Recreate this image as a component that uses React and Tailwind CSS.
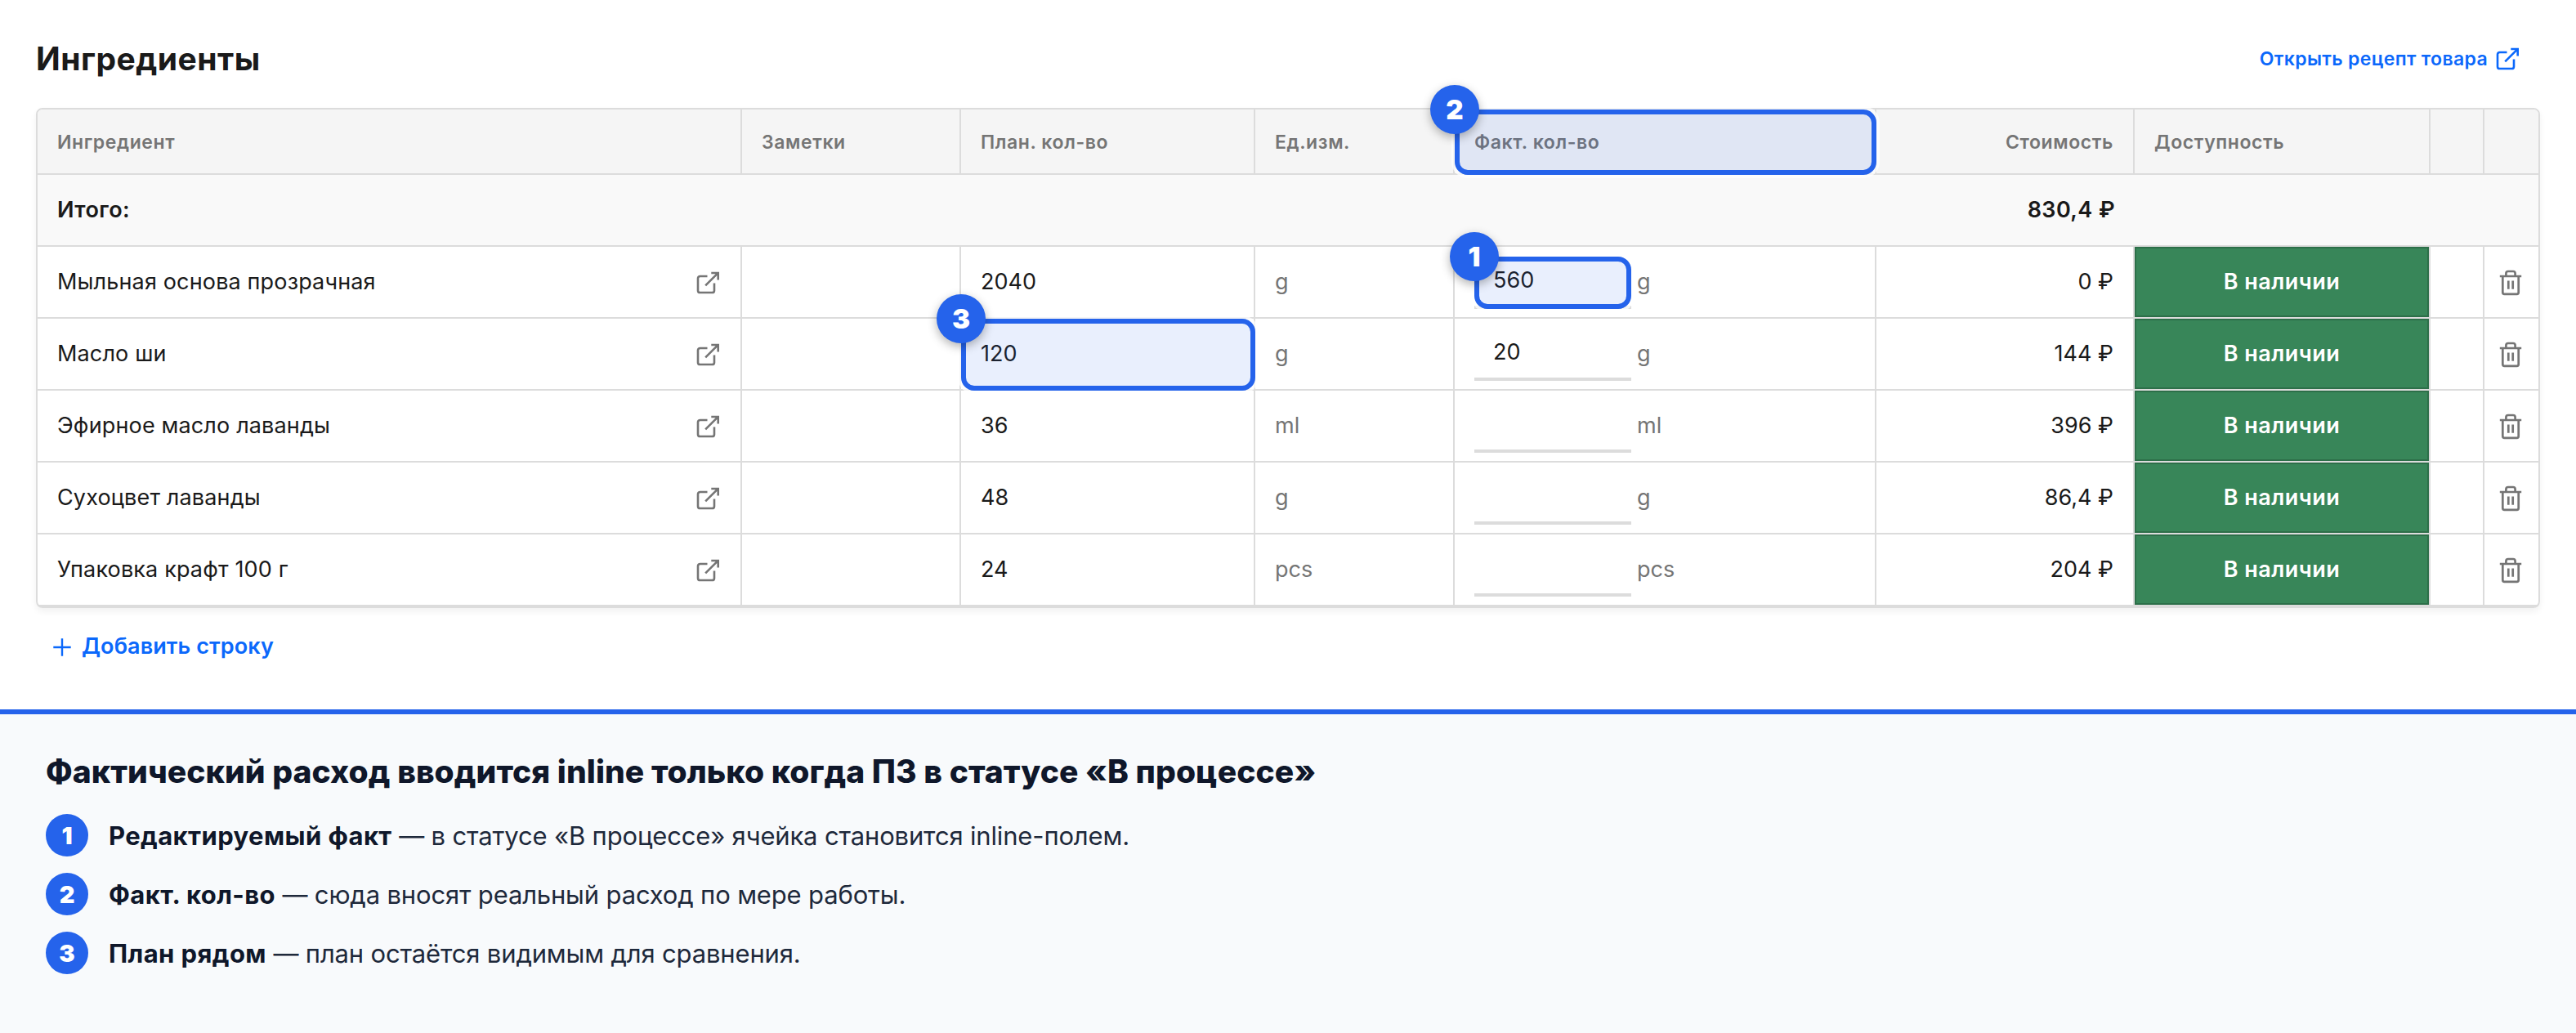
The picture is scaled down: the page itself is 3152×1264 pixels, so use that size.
import React from 'react';

const ingredients = [
  { name: 'Мыльная основа прозрачная', plan: '2040', unit: 'g', fact: '560', cost: '0 ₽', factMark: 1 },
  { name: 'Масло ши', plan: '120', unit: 'g', fact: '20', cost: '144 ₽', planMark: 3 },
  { name: 'Эфирное масло лаванды', plan: '36', unit: 'ml', fact: '', cost: '396 ₽' },
  { name: 'Сухоцвет лаванды', plan: '48', unit: 'g', fact: '', cost: '86,4 ₽' },
  { name: 'Упаковка крафт 100 г', plan: '24', unit: 'pcs', fact: '', cost: '204 ₽' },
];

const notes = [
  { title: 'Редактируемый факт', text: '— в статусе «В процессе» ячейка становится inline-полем.' },
  { title: 'Факт. кол-во', text: '— сюда вносят реальный расход по мере работы.' },
  { title: 'План рядом', text: '— план остаётся видимым для сравнения.' },
];

const columns = 'grid grid-cols-[862px_268px_360px_244px_516px_316px_362px_66px_66px]';
const cell = 'flex items-center border-r-2 border-[#dcdcdc] pl-6 pb-0.5';
const headCell = 'flex items-center border-r-2 border-[#dcdcdc] pl-6 pt-0.5';

function OpenIcon({ className }) {
  return (
    <svg className={className} width="28" height="28" viewBox="0 0 28 28" fill="none" stroke="currentColor" strokeWidth="2.6">
      <path d="M13.5 6H4.6A2.6 2.6 0 0 0 2 8.6v14.8A2.6 2.6 0 0 0 4.6 26h14.8a2.6 2.6 0 0 0 2.6-2.6V14.5" />
      <path d="M18.3 2h8.4v8.6M26.5 2.2 11.2 17.4" />
    </svg>
  );
}

function TrashIcon() {
  return (
    <svg width="28" height="32" viewBox="0 0 28 32" fill="none" stroke="#757575" strokeWidth="2.7">
      <path d="M.8 8h26.4M4.3 8v19.8a2 2 0 0 0 2 2h15.4a2 2 0 0 0 2-2V8" />
      <path d="M8.4 8V4.6A2.6 2.6 0 0 1 11 2h6a2.6 2.6 0 0 1 2.6 2.6V8" />
      <path d="M11.3 13.4v10.4M16.7 13.4v10.4" />
    </svg>
  );
}

// Рамка-подсветка с номером в левом верхнем углу
function Highlight({ number, className }) {
  return (
    <div className={`absolute z-10 rounded-2xl border-6 border-[#2563eb] bg-[#2563eb]/10 shadow-[0_0_0_4px_rgba(255,255,255,0.7)] ${className}`}>
      <span className="absolute -left-9 -top-9 flex size-15 items-center justify-center rounded-full bg-[#2563eb] text-[33px] leading-none font-black text-white shadow-[0_4px_12px_rgba(0,0,0,0.3)]">
        {number}
      </span>
    </div>
  );
}

function Row({ item }) {
  return (
    <div className={`${columns} h-22 border-b-2 border-[#dcdcdc]`}>
      <div className={`${cell} justify-between pr-6.5`}>
        <span className="tracking-[0.15px]">{item.name}</span>
        <OpenIcon className="mt-1 text-[#757575]" />
      </div>
      <div className={cell}></div>
      <div className={`${cell} relative`}>
        {item.plan}
        {item.planMark && <Highlight number={item.planMark} className="-right-0.5 -bottom-0.5 left-0 top-0" />}
      </div>
      <div className={`${cell} text-[#757575]`}>{item.unit}</div>
      <div className={cell}>
        <div className="relative mt-1 flex h-16 w-48 items-center border-b-4 border-[#dcdcdc] pb-1 pl-[23px]">
          {item.fact}
          {item.factMark && <Highlight number={item.factMark} className="-bottom-1 left-0 right-0 top-0" />}
        </div>
        <span className="ml-[7px] text-[#757575]">{item.unit}</span>
      </div>
      <div className={`${cell} justify-end pr-6`}>{item.cost}</div>
      <div className="border-r-2 border-[#dcdcdc]">
        <div className="flex h-full items-center justify-center border-2 border-[#2d6f49] bg-[#388659] pb-0.5 font-semibold tracking-[0.45px] text-white">
          В наличии
        </div>
      </div>
      <div className="border-r-2 border-[#dcdcdc]"></div>
      <div className="flex items-center justify-center pt-0.5 pr-0.5">
        <TrashIcon />
      </div>
    </div>
  );
}

function App() {
  return (
    <div className="flex h-[1264px] w-[3152px] flex-col overflow-hidden bg-white font-['Inter',sans-serif] text-[27px] leading-none text-[#1a1a1a]">
      <div className="h-[868px] px-11">
        <div className="flex h-33 items-center justify-between pt-3 pr-6.5">
          <h1 className="pb-0.5 text-[39px] font-bold tracking-[0.5px]">Ингредиенты</h1>
          <a className="flex items-center gap-2.5 text-[23px] font-semibold tracking-[0.35px] text-[#0b68fb]">
            Открыть рецепт товара
            <OpenIcon />
          </a>
        </div>

        {/* Таблица ингредиентов */}
        <div className="rounded-lg border-2 border-[#dcdcdc] shadow-[0_4px_8px_rgba(0,0,0,0.06)]">
          <div className={`${columns} h-20 rounded-t-md border-b-2 border-[#dcdcdc] bg-[#f5f5f5] text-[23px] font-semibold tracking-[0.6px] text-[#757575]`}>
            <div className={headCell}>Ингредиент</div>
            <div className={headCell}>Заметки</div>
            <div className={headCell}>План. кол-во</div>
            <div className={headCell}>Ед.изм.</div>
            <div className={`${headCell} relative`}>
              Факт. кол-во
              <Highlight number={2} className="-bottom-0.5 -right-0.5 left-0 top-0 tracking-normal" />
            </div>
            <div className={`${headCell} justify-end pr-6`}>Стоимость</div>
            <div className={headCell}>Доступность</div>
            <div className={headCell}></div>
            <div></div>
          </div>
          <div className="flex h-22 items-center border-b-2 border-[#dcdcdc] bg-[#f9f9f9] pb-0.5 pl-6 font-semibold tracking-[0.4px]">
            <span>Итого:</span>
            <span className="ml-auto pr-[518px]">830,4 ₽</span>
          </div>
          {ingredients.map((item) => (
            <Row key={item.name} item={item} />
          ))}
        </div>

        <button className="mt-[33px] ml-5 flex items-center gap-3 font-semibold tracking-[0.1px] text-[#0b68fb]">
          <svg className="mt-0.5" width="24" height="24" viewBox="0 0 24 24" fill="none" stroke="currentColor" strokeWidth="2.4">
            <path d="M12 1.3v21.4M1.3 12h21.4" />
          </svg>
          Добавить строку
        </button>
      </div>

      {/* Пояснения к номерам */}
      <div className="flex-1 border-t-6 border-[#2563eb] bg-[#f8fafc] px-14 pt-[50px] text-[#0f172a]">
        <h2 className="text-[39px] font-extrabold tracking-[0.06px]">
          Фактический расход вводится inline только когда ПЗ в статусе «В процессе»
        </h2>
        <ul className="mt-[33px] flex flex-col gap-5 text-[31px]">
          {notes.map((note, index) => (
            <li key={note.title} className="flex h-13 items-center gap-[25px]">
              <span className="flex size-13 items-center justify-center rounded-full bg-[#2563eb] text-[29px] font-black text-white">
                {index + 1}
              </span>
              <p className="tracking-[-0.16px] text-[#1e293b]">
                <strong className="font-bold tracking-[0.4px] text-[#0f172a]">{note.title}</strong> {note.text}
              </p>
            </li>
          ))}
        </ul>
      </div>
    </div>
  );
}

export default App;
